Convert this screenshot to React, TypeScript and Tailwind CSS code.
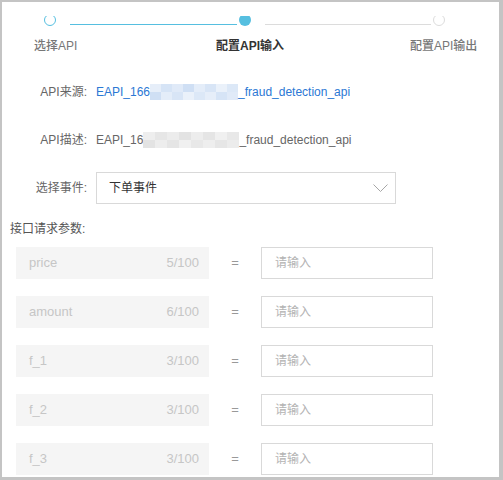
import React from "react";

const params = [
  { name: "price", count: "5/100" },
  { name: "amount", count: "6/100" },
  { name: "f_1", count: "3/100" },
  { name: "f_2", count: "3/100" },
  { name: "f_3", count: "3/100" },
];

function Mosaic({ tone, width }: { tone: "blue" | "gray"; width: number }) {
  const blue = ["#e6eef9", "#d6e4f6", "#e0eaf8", "#cfdff4", "#e4edf9", "#d8e5f6", "#eaf1fa", "#dce8f7"];
  const gray = ["#eeeeee", "#e6e6e6", "#ececec", "#e3e3e3", "#ededed", "#e5e5e5", "#f0f0f0", "#e8e8e8"];
  const cols = tone === "blue" ? blue : gray;
  const w = Math.round(width / cols.length);
  return (
    <span className="inline-flex h-[16px] align-middle">
      {cols.map((c, i) => (
        <span key={i} className="flex flex-col" style={{ width: w }}>
          <span className="h-[8px]" style={{ backgroundColor: c }} />
          <span className="h-[8px]" style={{ backgroundColor: cols[(i + 3) % cols.length] }} />
        </span>
      ))}
    </span>
  );
}

export default function App() {
  return (
    <div className="w-[503px] h-[480px] bg-white border-t-2 border-l-2 border-r-4 border-b-[3px] border-[#c4c4c4] overflow-hidden [font-family:'Liberation_Sans','Noto_Sans_CJK_SC',sans-serif]">
      {/* Steps */}
      <div className="mt-[14px] h-[10px] overflow-hidden">
        <div className="flex items-end -mt-[2px] h-3 pl-[42px]">
          <span className="w-3 h-3 rounded-full border border-[#56bfe0] shrink-0" />
          <span className="ml-[14px] mr-[2px] mb-[1px] w-[167px] h-px bg-[#56bfe0]" />
          <span className="w-3 h-3 rounded-full bg-[#56bfe0] shrink-0" />
          <span className="ml-[14px] mr-[2px] mb-[1px] w-[166px] h-px bg-[#dcdcdc]" />
          <span className="w-3 h-3 rounded-full border border-[#dcdcdc] shrink-0" />
        </div>
      </div>
      <div className="mt-[12px] flex pl-[32px] text-[12px] leading-[17px] text-[#777]">
        <span className="w-[182px] font-medium">选择API</span>
        <span className="w-[194px] font-semibold text-[#333]">配置API输入</span>
        <span className="font-medium">配置API输出</span>
      </div>

      {/* Form */}
      <div className="mt-[21px] flex items-center h-8">
        <span className="w-[85px] text-right text-[12px] text-[#666]">API来源:</span>
        <span className="ml-[9px] text-[12px] text-[#2b78d4] flex items-center">
          EAPI_166
          <Mosaic tone="blue" width={88} />
          _fraud_detection_api
        </span>
      </div>
      <div className="mt-4 flex items-center h-8">
        <span className="w-[85px] text-right text-[12px] text-[#666]">API描述:</span>
        <span className="ml-[9px] text-[12px] text-[#666] flex items-center">
          EAPI_16
          <Mosaic tone="gray" width={96} />
          _fraud_detection_api
        </span>
      </div>
      <div className="mt-4 flex items-center h-8">
        <span className="w-[85px] text-right text-[12px] text-[#666]">选择事件:</span>
        <div className="ml-[9px] w-[300px] h-8 border border-[#d9d9d9] flex items-center justify-between pl-3 pr-[4px]">
          <span className="text-[12px] text-[#333]">下单事件</span>
          <svg width="15" height="8" viewBox="0 0 15 8" className="mr-[3px]">
            <polyline points="0.5,0.5 7.5,7.5 14.5,0.5" fill="none" stroke="#a6a6a6" strokeWidth="1" />
          </svg>
        </div>
      </div>

      <div className="mt-4 pl-[8px] text-[12px] leading-[18px] text-[#555]">接口请求参数:</div>

      <div className="mt-[9px] flex flex-col gap-[17px]">
        {params.map((p) => (
          <div key={p.name} className="flex items-center h-8 pl-[14px]">
            <div className="w-[193px] h-8 bg-[#f5f5f5] flex items-center justify-between pl-[13px] pr-[10px] text-[13px] text-[#c6c6c6]">
              <span>{p.name}</span>
              <span>{p.count}</span>
            </div>
            <span className="w-[52px] text-center text-[13px] text-[#999]">=</span>
            <div className="w-[172px] h-8 border border-[#d9d9d9] flex items-center pl-[13px] text-[12px] text-[#b3b3b3]">
              请输入
            </div>
          </div>
        ))}
      </div>
    </div>
  );
}
